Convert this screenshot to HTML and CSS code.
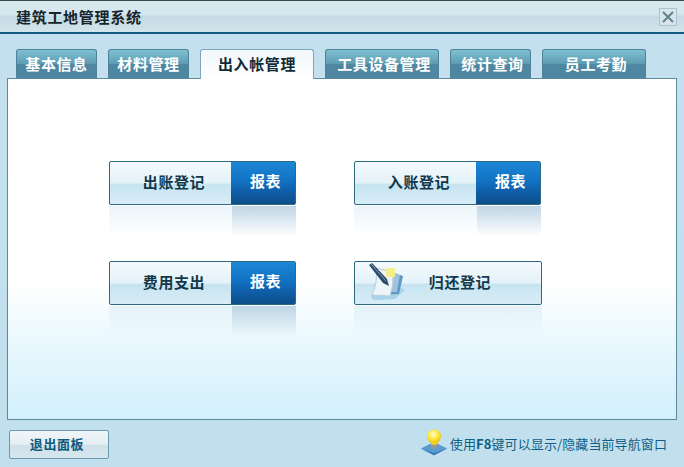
FILE: index.html
```html
<!DOCTYPE html>
<html lang="zh">
<head>
<meta charset="utf-8">
<title>建筑工地管理系统</title>
<link rel="stylesheet" href="styles.css">
</head>
<body>
<div class="window">
  <header class="titlebar">
    <h1 class="title">建筑工地管理系统</h1>
    <button class="close" aria-label="关闭">
      <svg width="14" height="14" viewBox="0 0 14 14"><path d="M2 2 L12 12 M12 2 L2 12" stroke="#5d7f8e" stroke-width="2" fill="none"/></svg>
    </button>
  </header>
  <nav class="tabs">
    <a class="tab w81">基本信息</a>
    <a class="tab w81">材料管理</a>
    <a class="tab w114 active">出入帐管理</a>
    <a class="tab w114 nudge">工具设备管理</a>
    <a class="tab w81 nudge">统计查询</a>
    <a class="tab w104 nudge">员工考勤</a>
  </nav>
  <main class="panel">
    <div class="grid">
      <div class="item">
        <div class="btn"><span class="btn-label">出账登记</span><span class="btn-report">报表</span></div>
        <div class="reflect"><i></i><b></b></div>
      </div>
      <div class="item">
        <div class="btn"><span class="btn-label">入账登记</span><span class="btn-report">报表</span></div>
        <div class="reflect"><i></i><b></b></div>
      </div>
      <div class="item">
        <div class="btn"><span class="btn-label">费用支出</span><span class="btn-report">报表</span></div>
        <div class="reflect"><i></i><b></b></div>
      </div>
      <div class="item item-wide">
        <div class="btn btn-icon">
          <svg class="note" width="42" height="38" viewBox="0 0 42 38">
            <path d="M4 31 Q1 37 9 37 L27 36 L37 27 L33 25 Z" fill="#a9d3e8"/>
            <path d="M14 6 L35 13 L31 31 L9 32 Q13 20 14 6 Z" fill="#5f96c6"/>
            <path d="M17 7 L32 12 L29 29 L14 29 Z" fill="#9cc2e0"/>
            <path d="M8 5 L25 9 Q26 22 22 33 L4 32 Q10 20 8 5 Z" fill="#eef5f8" stroke="#b4cfdd"/>
            <rect x="18" y="5" width="9" height="9" fill="#f6ee8c"/>
            <path d="M1 2 L4 0 L19 16 L21 23 L15 20 Z" fill="#2c4a6a"/>
            <path d="M3 1 L18 18" stroke="#7e9cb8" stroke-width="1"/>
          </svg>
          <span class="btn-label">归还登记</span>
        </div>
        <div class="reflect reflect-fade"></div>
      </div>
    </div>
  </main>
  <footer class="footer">
    <button class="exit">退出面板</button>
    <div class="hint">
      <svg width="28" height="30" viewBox="0 0 30 30">
        <defs>
          <radialGradient id="bulb" cx="0.45" cy="0.35" r="0.7"><stop offset="0" stop-color="#fffbd0"/><stop offset="0.5" stop-color="#ffe83a"/><stop offset="1" stop-color="#e8b400"/></radialGradient>
        </defs>
        <path d="M1 21 L15 14 L29 21 L15 28 Z" fill="#5b9bd0"/>
        <path d="M1 21 L15 28 L29 21 L15 26 Z" fill="#2f78b4"/>
        <rect x="11.5" y="15" width="7" height="6" rx="1" fill="#8a9aa0"/>
        <circle cx="15" cy="8" r="7.5" fill="url(#bulb)"/>
        <rect x="12" y="13" width="6" height="4" fill="#f2cf20"/>
      </svg>
      <span class="hint-text">使用<b>F8</b>键可以显示/隐藏当前导航窗口</span>
    </div>
  </footer>
</div>
</body>
</html>
```
FILE: styles.css
```css
* { box-sizing: border-box; }
html, body { margin: 0; padding: 0; }
body {
  width: 684px;
  height: 467px;
  overflow: hidden;
  font-family: "Noto Sans CJK SC", "Liberation Sans", sans-serif;
}
.window {
  width: 684px;
  height: 467px;
  display: flex;
  flex-direction: column;
  background: linear-gradient(#c4e0ee, #c1dfed);
}
.titlebar {
  height: 34px;
  border-top: 1px solid #3c4448;
  border-bottom: 2px solid #0f5b82;
  background: linear-gradient(#d9e9f0 0, #d4e6ee 45%, #c4dae3 48%, #d2e4ec 100%);
  display: flex;
  align-items: center;
  justify-content: space-between;
  padding: 0 7px 0 16px;
}
.title {
  margin: 0;
  font-size: 15px;
  font-weight: 700;
  letter-spacing: 0.7px;
  color: #15242c;
  line-height: 18px;
}
.close {
  width: 18px;
  height: 18px;
  padding: 0;
  display: flex;
  align-items: center;
  justify-content: center;
  background: #d7e6ec;
  border: 1px solid #a9c3cf;
}
.tabs {
  margin-top: 15px;
  padding-left: 16px;
  display: flex;
  gap: 11px;
  height: 29px;
  position: relative;
  z-index: 1;
}
.tab {
  height: 29px;
  border: 1px solid #4f8298;
  border-bottom: 0;
  border-radius: 3px 3px 0 0;
  background: linear-gradient(#7fc0d2 0, #5f9db3 48%, #4e87a2 52%, #4e86a2 100%);
  color: #fff;
  font-size: 15px;
  font-weight: 700;
  letter-spacing: 0.6px;
  display: flex;
  align-items: center;
  justify-content: center;
  padding-bottom: 2px;
}
.tab.nudge { padding-left: 4px; }
.w81 { width: 81px; }
.w114 { width: 114px; }
.w104 { width: 104px; }
.tab.active {
  height: 30px;
  border-color: #7fa6b8;
  background: linear-gradient(#f0f7fa, #ffffff);
  color: #122a36;
}
.panel {
  margin: 0 7px;
  width: 670px;
  height: 342px;
  border: 1px solid #5c8a9e;
  background: linear-gradient(#fff 0, #fff 60%, #e6f7fd 80%, #d2f0fc 100%);
  padding-top: 82px;
}
.grid {
  display: grid;
  grid-template-columns: 187px 188px;
  column-gap: 58px;
  row-gap: 14px;
  margin-left: 101px;
}
.item { width: 187px; height: 86px; display: flex; flex-direction: column; }
.item-wide { width: 188px; }
.btn {
  height: 44px;
  display: flex;
  border: 1px solid #2f6a85;
  border-radius: 2px;
  background: linear-gradient(#f4fafd 0, #e4f2f9 50%, #c6e4f1 53%, #d8edf6 100%);
}
.btn-label {
  flex: 1;
  display: flex;
  align-items: center;
  justify-content: center;
  font-size: 15px;
  font-weight: 700;
  letter-spacing: 0.6px;
  color: #12384c;
  padding: 0 0 3px 7px;
}
.btn-report {
  width: 64px;
  background: linear-gradient(#1d86d6 0, #1272c2 45%, #0f5ea8 70%, #0d4f8a 100%);
  color: #fff;
  font-size: 15px;
  font-weight: 700;
  letter-spacing: 0.6px;
  display: flex;
  align-items: center;
  justify-content: center;
  padding: 0 0 6px 5px;
}
.btn-icon { position: relative; }
.btn-icon .btn-label { padding-left: 24px; }
.note { position: absolute; left: 13px; top: 1px; }
.reflect {
  height: 30px;
  margin-top: 1px;
  display: flex;
  justify-content: flex-end;
  background: linear-gradient(rgba(205,228,240,.4), rgba(255,255,255,0));
}
.reflect i { flex: 1; }
.reflect b {
  width: 64px;
  background: linear-gradient(rgba(130,170,200,.4), rgba(255,255,255,0));
}
.reflect-fade { background: linear-gradient(rgba(205,228,240,.45), rgba(225,245,252,0)); }
.footer {
  flex: 1;
  display: flex;
  justify-content: space-between;
  align-items: flex-start;
  padding: 10px 17px 0 9px;
}
.exit {
  width: 100px;
  height: 29px;
  padding: 0 4px 3px 0;
  border: 1px solid #6e99ad;
  border-radius: 2px;
  background: linear-gradient(#eff6f9 0, #e4eef3 48%, #cfe0e8 55%, #d6e6ee 100%);
  color: #0f5a80;
  font-family: inherit;
  font-size: 13px;
  font-weight: 700;
  letter-spacing: 0.6px;
  cursor: pointer;
}
.hint {
  display: flex;
  align-items: center;
  gap: 2px;
  color: #105f88;
  font-size: 13px;
  letter-spacing: 0.1px;
  margin-top: -2px;
}
.hint-text { margin-top: 0; }
```
